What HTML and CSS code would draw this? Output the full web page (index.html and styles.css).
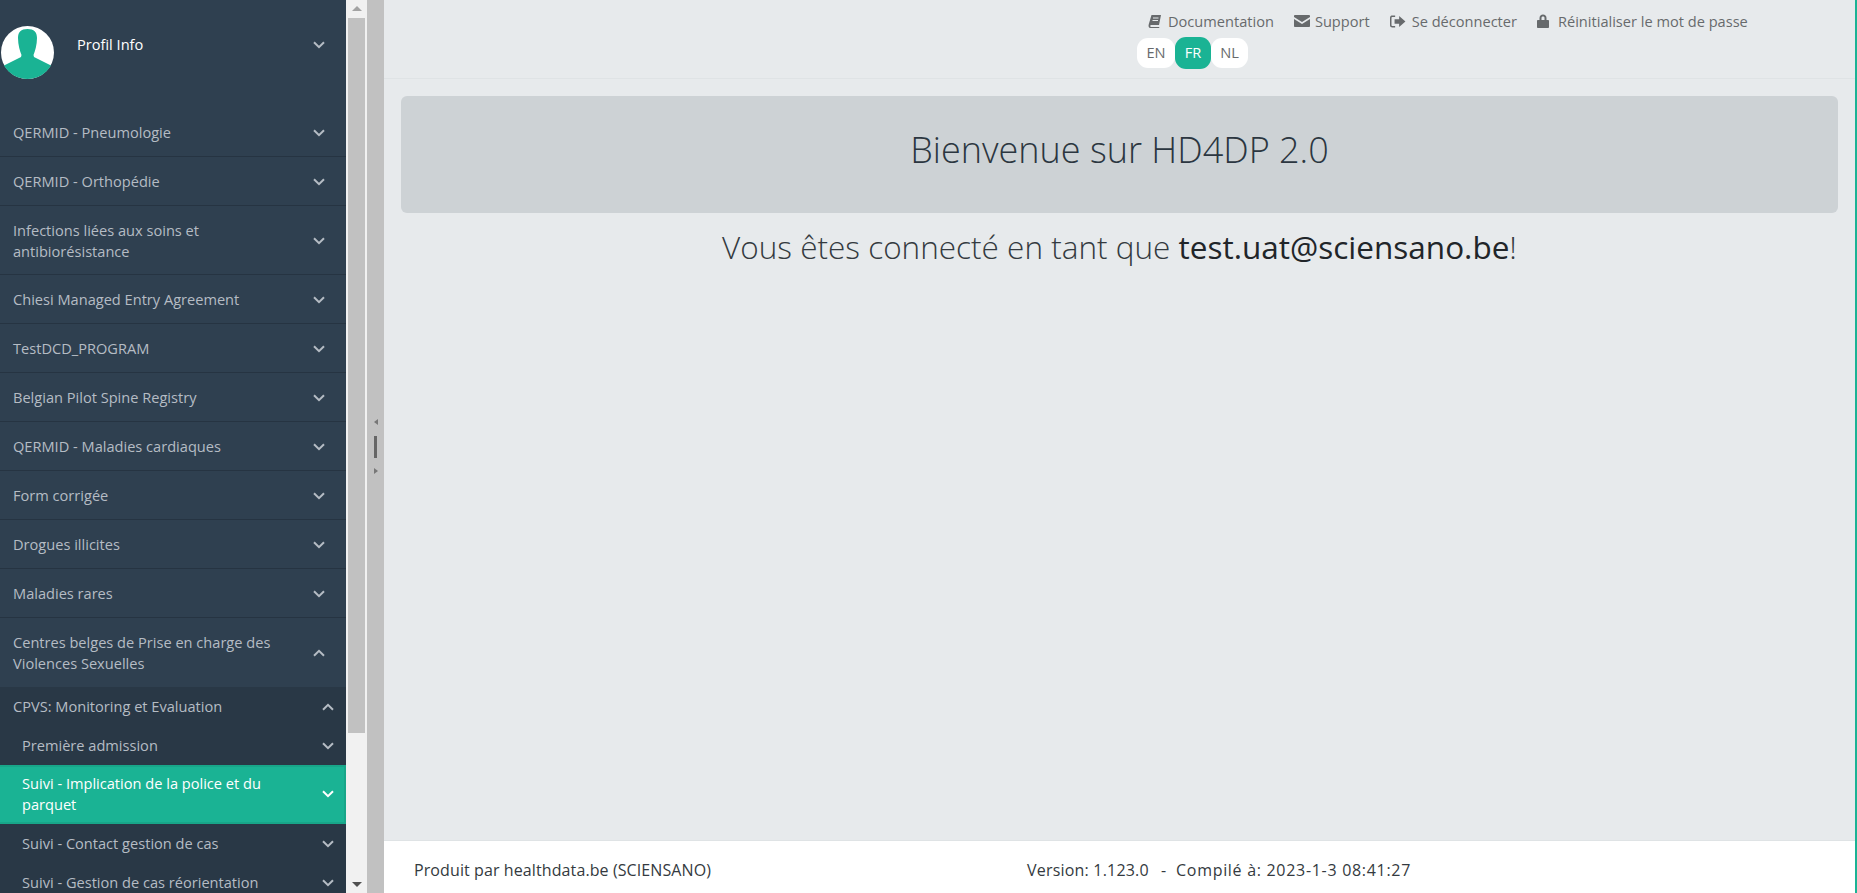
FILE: index.html
```html
<!DOCTYPE html>
<html lang="fr">
<head>
    <meta charset="UTF-8">
    <meta name="viewport" content="width=device-width, initial-scale=1.0">
    <title>HD4DP 2.0</title>
    <link rel="stylesheet" href="styles.css">
</head>
<body>
    <svg class="defs" width="0" height="0">
        <symbol id="chevDown" viewBox="0 0 12 8"><polyline points="1,1.2 6,6.2 11,1.2" fill="none" stroke="currentColor" stroke-width="2"/></symbol>
        <symbol id="chevUp" viewBox="0 0 12 8"><polyline points="1,6.8 6,1.8 11,6.8" fill="none" stroke="currentColor" stroke-width="2"/></symbol>
    </svg>
    <div class="app">
        <!-- Sidebar -->
        <div class="sidebar">
            <div class="profile">
                <svg class="avatar" viewBox="0 0 53 53">
                    <circle cx="26.5" cy="26.5" r="26.5" fill="#fff"/>
                    <path d="M26.5 3 C33 3 36 6 36 12 C36 19 34 25 32.500 29 L33 31 L50 39.500 C45 48 36 53 26.500 53 C17 53 8 48 3 39.500 L20 31 L20.500 29 C19 25 17 19 17 12 C17 6 20 3 26.500 3 Z" fill="#1ab394"/>
                </svg>
                <span class="profile-name">Profil Info</span>
                <svg class="chev"><use href="#chevDown"/></svg>
            </div>
            <ul class="menu">
                <li class="menu-item"><span>QERMID - Pneumologie</span><svg class="chev"><use href="#chevDown"/></svg></li>
                <li class="menu-item"><span>QERMID - Orthopédie</span><svg class="chev"><use href="#chevDown"/></svg></li>
                <li class="menu-item two-line"><span>Infections liées aux soins et antibiorésistance</span><svg class="chev"><use href="#chevDown"/></svg></li>
                <li class="menu-item"><span>Chiesi Managed Entry Agreement</span><svg class="chev"><use href="#chevDown"/></svg></li>
                <li class="menu-item"><span>TestDCD_PROGRAM</span><svg class="chev"><use href="#chevDown"/></svg></li>
                <li class="menu-item"><span>Belgian Pilot Spine Registry</span><svg class="chev"><use href="#chevDown"/></svg></li>
                <li class="menu-item"><span>QERMID - Maladies cardiaques</span><svg class="chev"><use href="#chevDown"/></svg></li>
                <li class="menu-item"><span>Form corrigée</span><svg class="chev"><use href="#chevDown"/></svg></li>
                <li class="menu-item"><span>Drogues illicites</span><svg class="chev"><use href="#chevDown"/></svg></li>
                <li class="menu-item"><span>Maladies rares</span><svg class="chev"><use href="#chevDown"/></svg></li>
                <li class="menu-item open"><span>Centres belges de Prise en charge des Violences Sexuelles</span><svg class="chev"><use href="#chevUp"/></svg></li>
            </ul>
            <ul class="submenu">
                <li class="sub-title"><span>CPVS: Monitoring et Evaluation</span><svg class="chev"><use href="#chevUp"/></svg></li>
                <li class="sub-item"><span>Première admission</span><svg class="chev"><use href="#chevDown"/></svg></li>
                <li class="sub-item active"><span>Suivi - Implication de la police et du parquet</span><svg class="chev"><use href="#chevDown"/></svg></li>
                <li class="sub-item"><span>Suivi - Contact gestion de cas</span><svg class="chev"><use href="#chevDown"/></svg></li>
                <li class="sub-item"><span>Suivi - Gestion de cas réorientation</span><svg class="chev"><use href="#chevDown"/></svg></li>
            </ul>
        </div>

        <!-- Fake scrollbar of the sidebar -->
        <div class="scrollbar">
            <div class="arrow-up"></div>
            <div class="thumb"></div>
            <div class="arrow-down"></div>
        </div>

        <!-- Splitter -->
        <div class="splitter">
            <div class="tick-left"></div>
            <div class="grip"></div>
            <div class="tick-right"></div>
        </div>

        <!-- Main -->
        <div class="main">
            <div class="topbar">
                <div class="links">
                    <a class="link">
                        <svg class="icon" viewBox="0 0 14 14"><path d="M3.500 1 H13 L11 11 H3 C2 11 2 13 3 13 H11.500 L11 14 H2.500 C0.500 14 0.300 12 0.700 10.500 Z M5 3.500 V4.500 H10.500 V3.500 Z M4.500 6 V7 H10 V6 Z" fill="currentColor" fill-rule="evenodd"/></svg>
                        Documentation</a>
                    <a class="link">
                        <svg class="icon icon-wide" viewBox="0 0 14 11" preserveAspectRatio="none"><path d="M0 1 C0 0.400 0.400 0 1 0 H13 C13.600 0 14 0.400 14 1 V1.800 L7 6.500 L0 1.800 Z M0 3.600 L7 8.200 L14 3.600 V10 C14 10.600 13.600 11 13 11 H1 C0.400 11 0 10.600 0 10 Z" fill="currentColor"/></svg>
                        Support</a>
                    <a class="link">
                        <svg class="icon icon-out" viewBox="0 0 14 12" preserveAspectRatio="none"><path d="M0 2.500 C0 1 1 0.500 2 0.500 H4.500 V1.800 H2 C1.500 1.800 1.300 2 1.300 2.500 V9.500 C1.300 10 1.500 10.200 2 10.200 H4.500 V11.500 H2 C1 11.500 0 11 0 9.500 Z M4 4 H8 V1 L13.500 6 L8 11 V8 H4 Z" fill="currentColor"/></svg>
                        Se déconnecter</a>
                    <a class="link">
                        <svg class="icon icon-lock" viewBox="0 0 12 14"><path d="M2.500 6 V4 C2.500 1.800 4 0.500 6 0.500 C8 0.500 9.500 1.800 9.500 4 V6 H11 C11.500 6 12 6.400 12 7 V13 C12 13.600 11.500 14 11 14 H1 C0.500 14 0 13.600 0 13 V7 C0 6.400 0.500 6 1 6 Z M4.500 6 H7.500 V4 C7.500 3 7 2.500 6 2.500 C5 2.500 4.500 3 4.500 4 Z" fill="currentColor" fill-rule="evenodd"/></svg>
                        Réinitialiser le mot de passe</a>
                </div>
                <div class="langs">
                    <span class="lang">EN</span>
                    <span class="lang lang-active">FR</span>
                    <span class="lang">NL</span>
                </div>
            </div>
            <div class="content">
                <div class="jumbotron">Bienvenue sur HD4DP 2.0</div>
                <div class="connected">Vous êtes connecté en tant que <span class="email">test.uat@sciensano.be</span>!</div>
            </div>
            <div class="footer">
                <span class="footer-left">Produit par healthdata.be (SCIENSANO)</span>
                <span class="footer-version">Version: 1.123.0</span>
                <span class="footer-sep">-</span>
                <span class="footer-built">Compilé à: 2023-1-3 08:41:27</span>
            </div>
        </div>
    </div>
</body>
</html>
```

FILE: styles.css
```css
* {
    margin: 0;
    padding: 0;
    box-sizing: border-box;
    font-family: "Open Sans", sans-serif;
}

html, body {
    height: 100%;
    overflow: hidden;
}

.defs {
    display: none;
}

.app {
    display: flex;
    height: 893px;
    background: #e7eaec;
    border-right: 2px solid #1ab394;
}

ul {
    list-style: none;
}

/* Sidebar */
.sidebar {
    width: 346px;
    flex: none;
    height: 893px;
    overflow: hidden;
    background: #2f4050;
    color: #b5bcc4;
    font-size: 14.6px;
    line-height: 21px;
}

.profile {
    height: 108px;
    display: flex;
    align-items: flex-start;
    padding: 26px 21px 0 1px;
}

.avatar {
    width: 53px;
    height: 53px;
    flex: none;
}

.profile-name {
    flex: 1;
    margin: 8px 0 0 23px;
    color: #fff;
}

.profile .chev {
    margin-top: 15px;
}

.chev {
    width: 12px;
    height: 8px;
    flex: none;
    color: #b5bcc4;
}

.menu-item {
    display: flex;
    align-items: center;
    justify-content: space-between;
    gap: 28px;
    padding: 14px 21px 13px 13px;
    border-bottom: 1px solid #263442;
}

.menu-item.two-line {
    padding-bottom: 12px;
}

.menu-item.open {
    border-bottom: none;
    padding-bottom: 13px;
}

.submenu {
    background: #293846;
}

.sub-title,
.sub-item {
    display: flex;
    align-items: center;
    justify-content: space-between;
    gap: 28px;
    padding: 9px 12px 9px 22px;
}

.sub-title {
    padding-left: 13px;
}

.sub-item.active {
    background: #1ab394;
    border: 2px solid #18a689;
    border-left: none;
    color: #fff;
    padding-top: 6px;
    padding-bottom: 7px;
    padding-right: 10px;
}

.sub-item.active .chev {
    color: #fff;
}

/* Scrollbar */
.scrollbar {
    width: 21px;
    flex: none;
    background: #f1f1f1;
    display: flex;
    flex-direction: column;
    align-items: center;
}

.arrow-up {
    margin: 6px 0 7px;
    border-left: 5px solid transparent;
    border-right: 5px solid transparent;
    border-bottom: 5px solid #a3a3a3;
}

.thumb {
    width: 17px;
    height: 715px;
    flex: none;
    background: #c1c1c1;
}

.arrow-down {
    margin-top: auto;
    margin-bottom: 6px;
    border-left: 5px solid transparent;
    border-right: 5px solid transparent;
    border-top: 5px solid #505050;
}

/* Splitter */
.splitter {
    width: 17px;
    flex: none;
    background: #c1c1c1;
    display: flex;
    flex-direction: column;
    align-items: center;
    padding-top: 419px;
}

.tick-left {
    border-top: 3px solid transparent;
    border-bottom: 3px solid transparent;
    border-right: 4px solid #777;
}

.grip {
    width: 3px;
    height: 22px;
    margin: 11px 0 10px;
    background: #666;
}

.tick-right {
    border-top: 3px solid transparent;
    border-bottom: 3px solid transparent;
    border-left: 4px solid #777;
}

/* Main */
.main {
    flex: 1;
    display: flex;
    flex-direction: column;
    min-width: 0;
}

.topbar {
    height: 79px;
    flex: none;
    padding: 11px 0 0 753px;
    border-bottom: 1px solid #dfe3e5;
    color: #676a6c;
    font-size: 14.6px;
}

.links {
    display: flex;
    line-height: 20px;
    gap: 20px;
    padding-left: 11px;
}

.link {
    display: flex;
    align-items: center;
}

.icon {
    width: 14px;
    height: 14px;
    margin-right: 6px;
}

.icon-wide {
    width: 16px;
    height: 12px;
    margin-right: 5px;
}

.icon-out {
    width: 16px;
    height: 13px;
    margin-right: 6px;
}

.icon-lock {
    width: 12px;
    margin-right: 9px;
}

.langs {
    display: flex;
    align-items: center;
    margin-top: 6px;
    height: 32px;
    line-height: 28px;
}

.lang {
    height: 30px;
    width: 37px;
    text-align: center;
    background: #fff;
    border-radius: 11px;
}

.lang:first-child {
    width: 38px;
}

.lang-active {
    width: 36px;
    height: 32px;
    line-height: 30px;
    background: #1ab394;
    color: #fff;
}

.content {
    flex: 1;
    padding: 17px 17px 0;
}

.jumbotron {
    height: 117px;
    background: #cdd2d5;
    border-radius: 6px;
    text-align: center;
    font-size: 36px;
    font-weight: 300;
    line-height: 107px;
    color: #2b3640;
}

.connected {
    margin-top: 12px;
    text-align: center;
    font-size: 31.5px;
    font-weight: 300;
    line-height: 44px;
    color: #343a40;
}

.email {
    font-weight: 400;
    color: #212529;
}

.footer {
    height: 53px;
    flex: none;
    background: #fff;
    border-top: 1px solid #dfe3e5;
    display: flex;
    align-items: center;
    padding: 5px 0 0 30px;
    font-size: 16px;
    color: #343a40;
}

.footer-left {
    width: 613px;
    letter-spacing: 0.1px;
}

.footer-version {
    letter-spacing: 0.2px;
}

.footer-sep {
    margin: 0 10px 0 12px;
}

.footer-built {
    letter-spacing: 0.7px;
}
```
